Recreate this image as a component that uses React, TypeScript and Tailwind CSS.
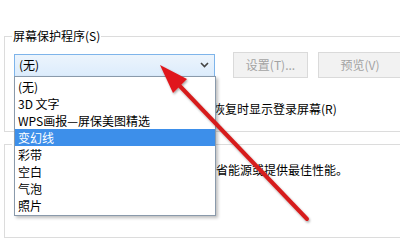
const items = ['(无)', '3D 文字', 'WPS画报—屏保美图精选', '变幻线', '彩带', '空白', '气泡', '照片'];

function Chevron() {
  return (
    <svg width="9" height="6" viewBox="0 0 9 6" className="shrink-0">
      <polyline points="1,1 4.5,4.5 8,1" fill="none" stroke="#444" strokeWidth="1.6" />
    </svg>
  );
}

function RedArrow() {
  return (
    <svg width="400" height="240" viewBox="0 0 400 240" className="absolute left-0 top-0 pointer-events-none">
      <defs>
        <filter id="sh" x="-10%" y="-10%" width="130%" height="130%">
          <feDropShadow dx="1" dy="1.5" stdDeviation="1.2" floodColor="#000" floodOpacity="0.35" />
        </filter>
      </defs>
      <g filter="url(#sh)">
        <line x1="176" y1="82" x2="307" y2="219" stroke="#d61f1f" strokeWidth="4" strokeLinecap="round" />
        <polygon points="160,65 187,79 173,93" fill="#e0191b" />
      </g>
    </svg>
  );
}

export default function App() {
  return (
    <div className="relative w-[400px] h-[240px] overflow-hidden bg-white text-black text-[12px] leading-[16px] font-['Noto_Sans_CJK_SC','Noto_Sans',sans-serif]">
      <div className="pl-[4px]">
        <fieldset className="mt-[28px] w-[440px] border border-[#dcdcdc]">
          <legend className="ml-[7px] px-[1px] leading-[16px]">屏幕保护程序(S)</legend>
          <div className="pt-[8px] pl-[9px] flex items-center">
            <div className="w-[201px] h-[23px] border border-[#7eb4ea] bg-gradient-to-b from-[#ecf4fc] to-[#dcecfc] flex items-center justify-between pl-[4px] pr-[5px]">
              <span>(无)</span>
              <Chevron />
            </div>
            <div className="ml-[18px] w-[75px] h-[26px] border border-[#dadada] bg-[#f2f2f2] text-[#a3a3a3] flex items-center justify-center">
              设置(T)...
            </div>
            <div className="ml-[10px] w-[90px] h-[26px] border border-[#dadada] bg-[#f2f2f2] text-[#a3a3a3] flex items-center justify-center pr-[6px]">
              预览(V)
            </div>
          </div>
          {/* wait spinner + checkbox sit under the open list */}
          <div className="mt-[20px] pl-[9px] h-[22px] flex items-center gap-[5px]">
            <div className="w-[165px] flex items-center">
              <div className="ml-[58px] w-[50px] h-[22px] border border-[#abadb3]" />
            </div>
            <div className="w-[13px] h-[13px] border border-[#333]" />
            <span className="ml-[-1px]">在恢复时显示登录屏幕(R)</span>
          </div>
          <div className="h-[11px]" />
        </fieldset>
        <fieldset className="mt-[4px] w-[440px] border border-[#dcdcdc]">
          <legend className="ml-[7px] px-[1px] leading-[16px]">电源管理</legend>
          <div className="h-[85px] pt-[10px] pl-[19px]">
            <p>通过调整显示亮度和其他电源设置节省能源或提供最佳性能。</p>
          </div>
        </fieldset>
      </div>

      <div className="absolute left-[14px] top-[76px] w-[202px] border border-[#8a9aab] bg-white shadow-[2px_2px_3px_rgba(0,0,0,0.25)] py-[1px]">
        {items.map((it) => (
          <div
            key={it}
            className={`h-[17px] flex items-center pl-[3px] ${it === '变幻线' ? 'bg-[#3d8fea] text-white' : ''}`}
          >
            {it}
          </div>
        ))}
      </div>

      <RedArrow />
    </div>
  );
}
